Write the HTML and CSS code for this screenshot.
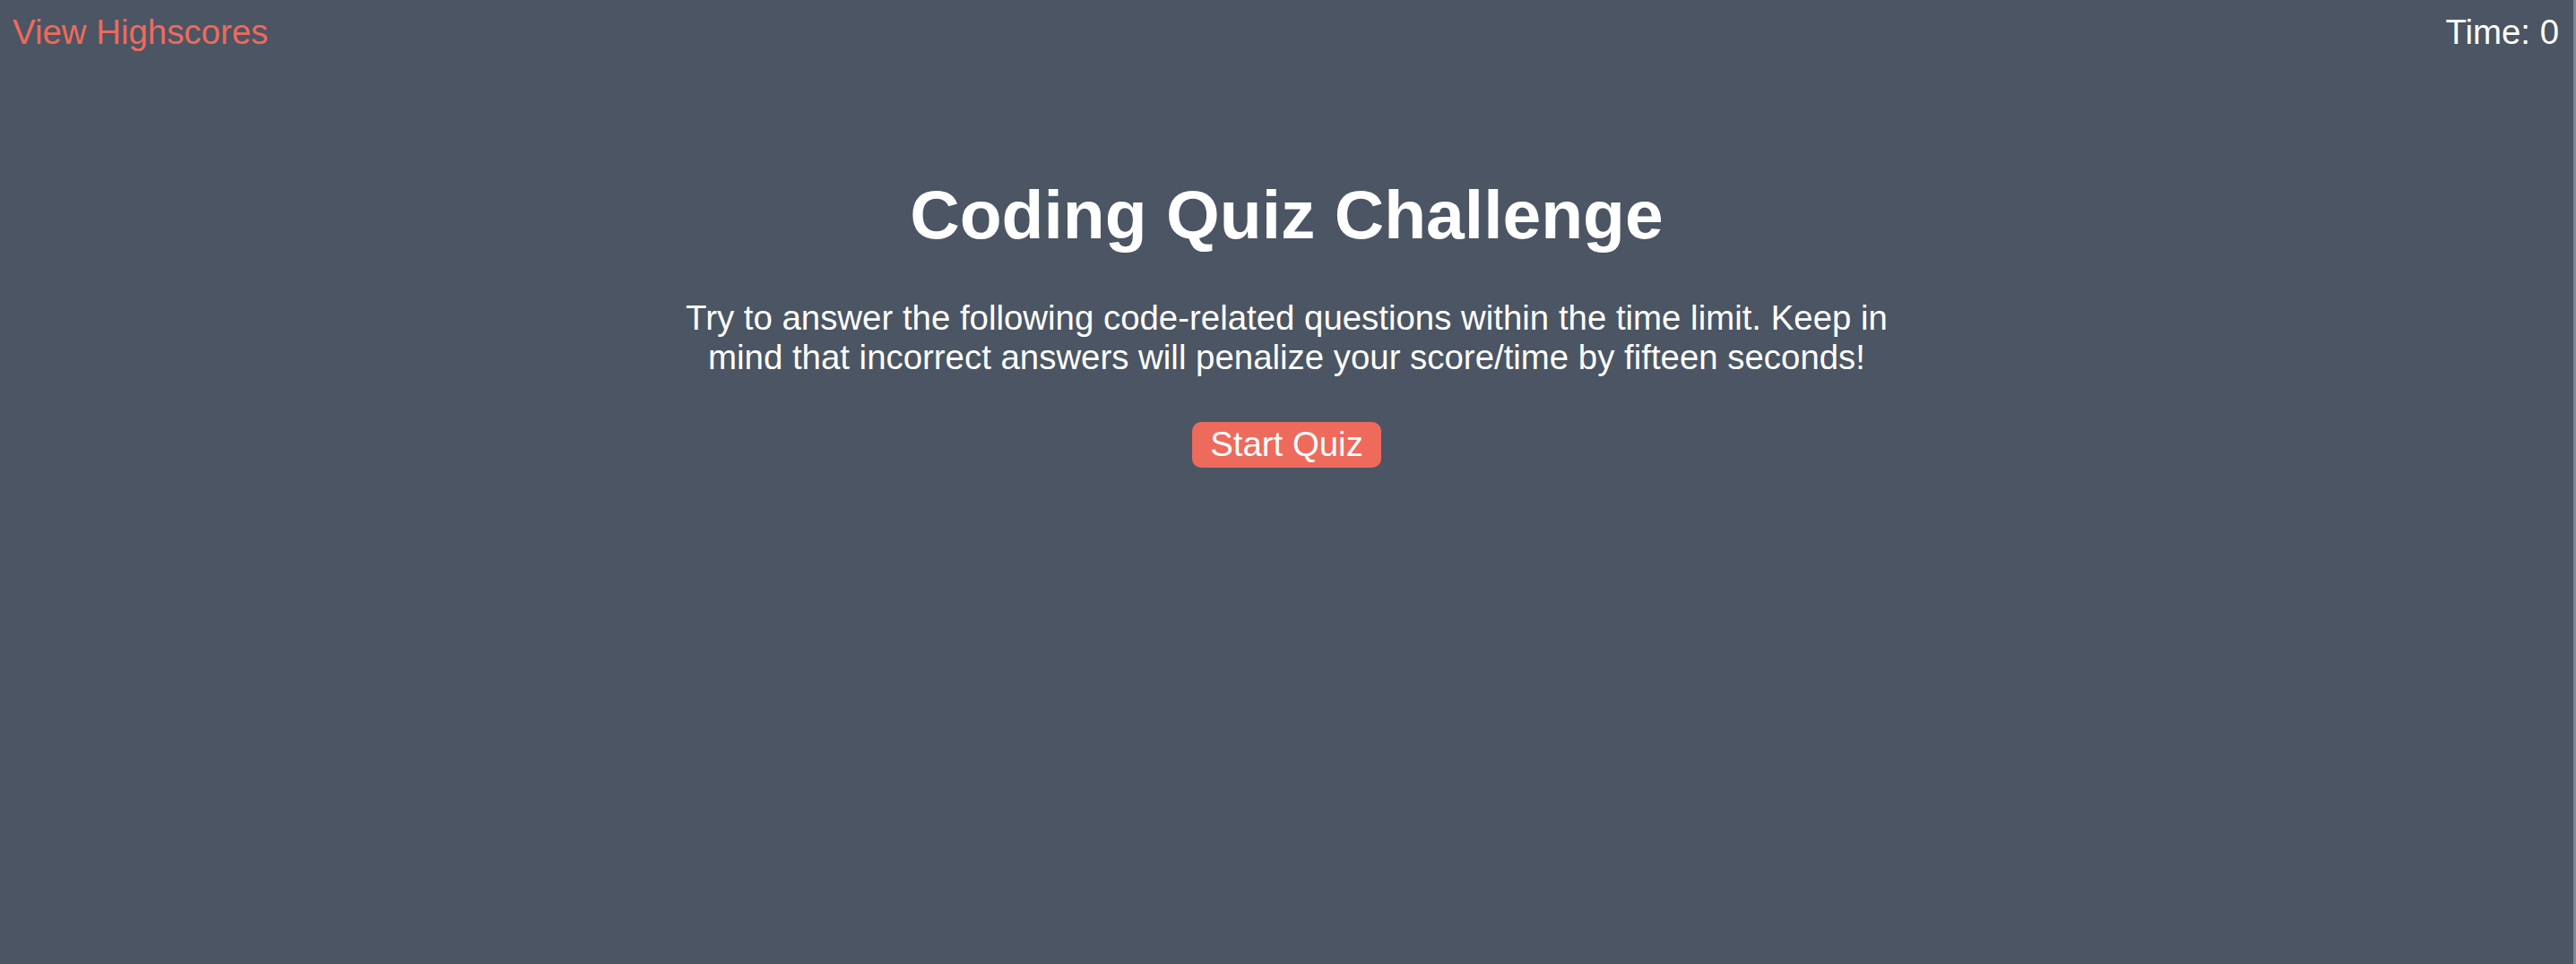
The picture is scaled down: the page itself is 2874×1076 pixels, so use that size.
FILE: index.html
```html
<!DOCTYPE html>
<html lang="en">
<head>
<meta charset="utf-8">
<title>Coding Quiz Challenge</title>
<link rel="stylesheet" href="styles.css">
</head>
<body>
<div class="page">
  <header class="topbar">
    <a class="highscores" href="#">View Highscores</a>
    <div class="timer">Time: <span>0</span></div>
  </header>
  <main class="intro">
    <h1 class="title">Coding Quiz Challenge</h1>
    <p class="lead">Try to answer the following code-related questions within the time limit. Keep in mind that incorrect answers will penalize your score/time by fifteen seconds!</p>
    <button class="start" type="button">Start Quiz</button>
  </main>
</div>
</body>
</html>
```
FILE: styles.css
```css
* { box-sizing: border-box; }
html, body {
  margin: 0;
  padding: 0;
  background: #4b5563;
}
body {
  font-family: "Liberation Sans", Arial, Helvetica, sans-serif;
  color: #ffffff;
}
.page {
  min-height: 100vh;
  border-right: 3px solid #838993;
}
.topbar {
  display: flex;
  justify-content: space-between;
  align-items: flex-start;
  padding: 14px 16px 0 14px;
  font-size: 38.4px;
}
.highscores {
  color: #ee6a5d;
  text-decoration: none;
}
.timer { color: #ffffff; }
.intro {
  display: flex;
  flex-direction: column;
  align-items: center;
  padding-top: 137px;
}
.title {
  margin: 0 0 49px;
  font-size: 76.8px;
  font-weight: 700;
  text-align: center;
}
.lead {
  margin: 0 0 50px;
  max-width: 1400px;
  font-size: 38.4px;
  text-align: center;
}
.start {
  font-family: inherit;
  font-size: 38.4px;
  color: #ffffff;
  background: #ee6a5d;
  border: none;
  border-radius: 10px;
  padding: 3px 20px 4px;
  cursor: pointer;
}
```
